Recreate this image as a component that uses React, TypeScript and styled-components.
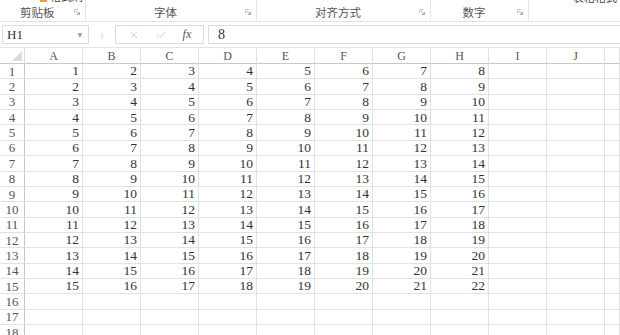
import React from "react";
import styled, { createGlobalStyle } from "styled-components";
import { X, Check } from "lucide-react";

const GlobalStyle = createGlobalStyle`
  html, body {
    margin: 0;
    padding: 0;
    background: #ffffff;
  }
  body {
    font-family: "Liberation Serif", serif;
    overflow: hidden;
  }
`;

const Page = styled.div`
  width: 620px;
  height: 335px;
  overflow: hidden;
  background: #ffffff;
`;

/* ---------- ribbon ---------- */

const Ribbon = styled.div`
  height: 21px;
  border-bottom: 1px solid #e2e2e2;
  display: flex;
  overflow: hidden;
  font-family: "Noto Sans CJK SC", "Noto Sans", sans-serif;
`;

const Group = styled.div<{ $w: number; $last?: boolean }>`
  width: ${(p) => p.$w}px;
  flex: ${(p) => (p.$last ? "1" : "none")};
  border-right: ${(p) => (p.$last ? "none" : "1px solid #e4e4e4")};
  display: flex;
  flex-direction: column;
  height: 20px;
`;

// bottom edge of the ribbon buttons that are scrolled out of view
const CutRow = styled.div<{ $pad: number }>`
  height: 3px;
  overflow: hidden;
  display: flex;
  align-items: flex-end;
  padding-left: ${(p) => p.$pad}px;
  gap: 3px;
  font-size: 11px;
  line-height: 11px;
  color: #444;
`;

const CutText = styled.span`
  display: block;
  height: 11px;
  margin-top: -8px;
`;

const PaintIcon = styled.span`
  display: block;
  width: 7px;
  height: 3px;
  background: #f0a030;
`;

const GroupFoot = styled.div<{ $center?: boolean }>`
  flex: 1;
  display: flex;
  align-items: center;
  justify-content: space-between;
  padding: 2px 5px 0 ${(p) => (p.$center ? 0 : 20)}px;
  font-size: 11.5px;
  color: #555;
`;

const Label = styled.span<{ $grow?: boolean }>`
  flex: ${(p) => (p.$grow ? 1 : "none")};
  text-align: ${(p) => (p.$grow ? "center" : "left")};
  white-space: nowrap;
`;

const Launcher = () => (
  <svg width="6" height="6" viewBox="0 0 6 6">
    <path d="M0.5 0.5h3.5M0.5 0.5v3.5" stroke="#c4c4c4" strokeWidth="1" fill="none" />
    <path d="M2 2l3.5 3.5M3 5.5h2.5v-2.5" stroke="#aaa" strokeWidth="1" fill="none" />
  </svg>
);

/* ---------- formula bar ---------- */

const FormulaBar = styled.div`
  height: 25px;
  display: flex;
  align-items: flex-start;
  padding-top: 3px;
  box-sizing: border-box;
`;

const NameBox = styled.div`
  width: 87px;
  height: 19px;
  margin-left: 2px;
  box-sizing: border-box;
  border: 1px solid #dcdcdc;
  display: flex;
  align-items: center;
  justify-content: space-between;
  padding: 0 6px 0 4px;
  font-size: 13px;
  color: #333;
`;

const Caret = styled.span`
  font-size: 6px;
  color: #999;
  font-family: "DejaVu Sans", sans-serif;
`;

const Grip = styled.div`
  width: 26px;
  height: 19px;
  display: flex;
  align-items: center;
  justify-content: center;
  color: #c8c8c8;
  font-size: 9px;
  font-family: "DejaVu Sans", sans-serif;
`;

const FxBox = styled.div`
  width: 89px;
  height: 19px;
  box-sizing: border-box;
  border: 1px solid #dcdcdc;
  display: flex;
  align-items: center;
  justify-content: space-around;
  padding: 0 4px;
  color: #b8b8b8;
`;

const Fx = styled.span`
  font-style: italic;
  font-size: 12px;
  color: #555;
`;

const FormulaInput = styled.div`
  flex: 1;
  height: 19px;
  margin-left: 4px;
  box-sizing: border-box;
  border: 1px solid #dcdcdc;
  border-right: none;
  padding-left: 9px;
  display: flex;
  align-items: center;
  font-size: 14px;
  color: #333;
`;

/* ---------- sheet ---------- */

const Sheet = styled.div`
  display: grid;
  grid-template-columns: 25px repeat(10, 58px) 1fr;
  grid-auto-rows: 15.36px;
  grid-template-rows: 16px;
  border-top: 1px solid #e4e4e4;
`;

const Corner = styled.div`
  border-right: 1px solid #dadada;
  border-bottom: 1px solid #c8c8c8;
  position: relative;
`;

const CornerTri = styled.div`
  position: absolute;
  right: 2px;
  bottom: 2px;
  width: 0;
  height: 0;
  border-left: 10px solid transparent;
  border-bottom: 10px solid #dcdcdc;
`;

const ColHead = styled.div`
  border-right: 1px solid #e2e2e2;
  border-bottom: 1px solid #c8c8c8;
  display: flex;
  align-items: center;
  justify-content: center;
  font-size: 12px;
  color: #555;
  line-height: 1;
`;

const RowHead = styled.div`
  border-right: 1px solid #c8c8c8;
  border-bottom: 1px solid #e2e2e2;
  display: flex;
  align-items: center;
  justify-content: center;
  font-size: 13px;
  color: #555;
  line-height: 1;
`;

const Cell = styled.div`
  border-right: 1px solid #e2e2e2;
  border-bottom: 1px solid #e2e2e2;
  display: flex;
  align-items: center;
  justify-content: flex-end;
  padding-right: 3px;
  font-size: 13.5px;
  color: #333;
  line-height: 1;
`;

const columns = ["A", "B", "C", "D", "E", "F", "G", "H", "I", "J", ""];
const ROWS = 18;

export default function App() {
  return (
    <Page>
      <GlobalStyle />
      <Ribbon>
        <Group $w={85}>
          <CutRow $pad={40}>
            <PaintIcon />
            <CutText>格式刷</CutText>
          </CutRow>
          <GroupFoot>
            <Label>剪贴板</Label>
            <Launcher />
          </GroupFoot>
        </Group>
        <Group $w={170}>
          <CutRow $pad={0} />
          <GroupFoot $center>
            <Label $grow>字体</Label>
            <Launcher />
          </GroupFoot>
        </Group>
        <Group $w={173}>
          <CutRow $pad={0} />
          <GroupFoot $center>
            <Label $grow>对齐方式</Label>
            <Launcher />
          </GroupFoot>
        </Group>
        <Group $w={97}>
          <CutRow $pad={0} />
          <GroupFoot $center>
            <Label $grow>数字</Label>
            <Launcher />
          </GroupFoot>
        </Group>
        <Group $w={95} $last>
          <CutRow $pad={44}>
            <CutText>表格格式</CutText>
          </CutRow>
        </Group>
      </Ribbon>

      <FormulaBar>
        <NameBox>
          <span>H1</span>
          <Caret>▼</Caret>
        </NameBox>
        <Grip>⁝</Grip>
        <FxBox>
          <X size={12} strokeWidth={1.3} />
          <Check size={12} strokeWidth={1.3} />
          <Fx>fx</Fx>
        </FxBox>
        <FormulaInput>8</FormulaInput>
      </FormulaBar>

      <Sheet>
        <Corner>
          <CornerTri />
        </Corner>
        {columns.map((c, i) => (
          <ColHead key={`h${i}`}>{c}</ColHead>
        ))}
        {Array.from({ length: ROWS }, (_, r) => (
          <React.Fragment key={r}>
            <RowHead>{r + 1}</RowHead>
            {columns.map((_, c) => (
              <Cell key={c}>{r < 15 && c < 8 ? r + 1 + c : ""}</Cell>
            ))}
          </React.Fragment>
        ))}
      </Sheet>
    </Page>
  );
}
